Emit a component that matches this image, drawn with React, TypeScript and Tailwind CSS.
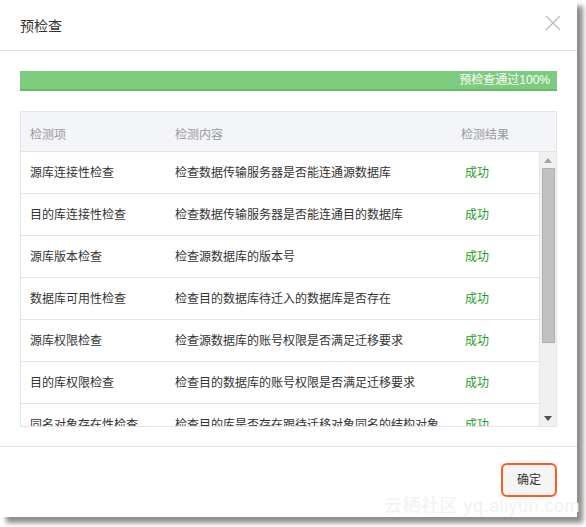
import React from "react";

type CheckRow = { item: string; content: string; result: string };

const ROWS: CheckRow[] = [
  { item: "源库连接性检查", content: "检查数据传输服务器是否能连通源数据库", result: "成功" },
  { item: "目的库连接性检查", content: "检查数据传输服务器是否能连通目的数据库", result: "成功" },
  { item: "源库版本检查", content: "检查源数据库的版本号", result: "成功" },
  { item: "数据库可用性检查", content: "检查目的数据库待迁入的数据库是否存在", result: "成功" },
  { item: "源库权限检查", content: "检查源数据库的账号权限是否满足迁移要求", result: "成功" },
  { item: "目的库权限检查", content: "检查目的数据库的账号权限是否满足迁移要求", result: "成功" },
  { item: "同名对象存在性检查", content: "检查目的库是否存在跟待迁移对象同名的结构对象", result: "成功" },
  { item: "源库binlog检查", content: "检查源数据库是否开启binlog", result: "成功" },
];

const FONT = "font-['Liberation_Sans','Noto_Sans_CJK_SC',sans-serif]";

export default function App() {
  return (
    <div className={`w-[586px] h-[527px] bg-white relative overflow-hidden ${FONT}`}>
      <div className="w-[577px] h-[517px] bg-white flex flex-col shadow-[6px_6px_5px_rgba(0,0,0,0.45)]">
        {/* 头部 */}
        <div className="h-[51px] border-b border-[#e3e4e6] flex items-center justify-between pl-5 pr-[16px] shrink-0">
          <span className="text-[14px] text-[#333] pt-[3px]">预检查</span>
          <svg width="16" height="16" viewBox="0 0 16 16" className="mt-[-4px]">
            <path d="M1 1L15 15M15 1L1 15" stroke="#bdbdbd" strokeWidth="1.3" fill="none" />
          </svg>
        </div>

        {/* 主体 */}
        <div className="px-5 pt-5 flex-1 flex flex-col min-h-0">
          <div className="h-[20px] bg-[#7dcc7d] border-b-2 border-[#66b866] flex items-center justify-end pr-[7px]">
            <span className="text-[12px] text-white leading-none">预检查通过100%</span>
          </div>

          <div className="mt-[20px] border border-[#e3e5e9] flex flex-col h-[316px]">
            <div className="h-[40px] bg-[#f3f5f8] border-b border-[#e3e5e9] flex items-center text-[12px] text-[#999] pt-[7px] shrink-0">
              <div className="w-[154px] pl-[9px]">检测项</div>
              <div className="w-[286px]">检测内容</div>
              <div>检测结果</div>
            </div>
            <div className="flex flex-1 min-h-0">
              <div className="flex-1 overflow-hidden border-r border-[#e3e5e9]">
                {ROWS.map((row) => (
                  <div
                    key={row.item}
                    className="h-[42px] border-b border-[#e3e5e9] flex items-center text-[12px] text-[#333]"
                  >
                    <div className="w-[154px] pl-[9px] whitespace-nowrap">{row.item}</div>
                    <div className="w-[290px] whitespace-nowrap">{row.content}</div>
                    <div className="text-[#1f9d1f]">{row.result}</div>
                  </div>
                ))}
              </div>
              <div className="w-[16px] bg-[#f0f0f0] flex flex-col items-center shrink-0">
                <div className="h-[16px] flex items-center justify-center">
                  <svg width="8" height="5" viewBox="0 0 8 5">
                    <path d="M0 5L4 0L8 5Z" fill="#a3a3a3" />
                  </svg>
                </div>
                <div className="w-[13px] h-[175px] bg-[#c1c1c1] border border-[#b0b0b0]" />
                <div className="flex-1" />
                <div className="h-[16px] flex items-center justify-center">
                  <svg width="8" height="5" viewBox="0 0 8 5">
                    <path d="M0 0L8 0L4 5Z" fill="#505050" />
                  </svg>
                </div>
              </div>
            </div>
          </div>
        </div>

        {/* 底部 */}
        <div className="h-[71px] border-t border-[#e3e4e6] flex items-start justify-end pr-[20px] pt-[16px] shrink-0">
          <button
            type="button"
            className="w-[56px] h-[34px] rounded-[6px] border-2 border-[#ff5a1f] bg-[#f5f5f5] text-[12px] text-[#333]"
          >
            确定
          </button>
        </div>
      </div>
      <div className="absolute left-[384px] top-[493px] text-[18px] text-[#f1f1f1] tracking-[0.5px] whitespace-nowrap pointer-events-none">
        云栖社区 yq.aliyun.com
      </div>
    </div>
  );
}
